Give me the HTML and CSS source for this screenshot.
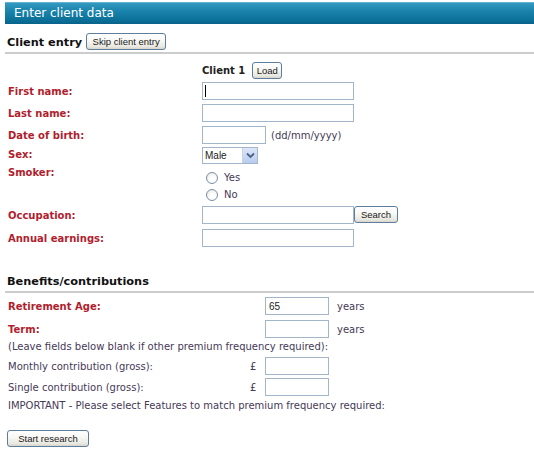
FILE: index.html
```html
<!DOCTYPE html>
<html>
<head>
<meta charset="utf-8">
<title>Enter client data</title>
<link rel="stylesheet" href="styles.css">
</head>
<body>
<div class="page">
  <div class="header">Enter client data</div>

  <div class="section-head">
    <h2 class="section-title">Client entry</h2>
    <button class="btn btn-skip" type="button">Skip client entry</button>
  </div>

  <div class="client">
    <div class="row row-client">
      <span class="label-spacer"></span>
      <span class="client-name">Client 1</span>
      <button class="btn btn-load" type="button">Load</button>
    </div>
    <div class="row">
      <label class="label">First name:</label>
      <span class="caret-wrap"><input class="field field-long" type="text"><span class="caret"></span></span>
    </div>
    <div class="row">
      <label class="label">Last name:</label>
      <input class="field field-long" type="text">
    </div>
    <div class="row">
      <label class="label">Date of birth:</label>
      <input class="field field-short" type="text">
      <span class="hint">(dd/mm/yyyy)</span>
    </div>
    <div class="row row-sex">
      <label class="label">Sex:</label>
      <span class="select-wrap">
        <select class="select"><option>Male</option><option>Female</option></select>
        <span class="select-arrow"><svg width="9" height="7" viewBox="0 0 9 7"><path d="M1 1.5 L4.5 5 L8 1.5" fill="none" stroke="#4d6185" stroke-width="1.8"/></svg></span>
      </span>
    </div>
    <div class="row-smoker">
      <label class="label label-top">Smoker:</label>
      <div class="radios">
        <label class="radio-row"><input class="radio" type="radio" name="smoker"><span>Yes</span></label>
        <label class="radio-row"><input class="radio" type="radio" name="smoker"><span>No</span></label>
      </div>
    </div>
    <div class="row">
      <label class="label">Occupation:</label>
      <input class="field field-long" type="text">
      <button class="btn btn-search" type="button">Search</button>
    </div>
    <div class="row row-annual">
      <label class="label">Annual earnings:</label>
      <input class="field field-long" type="text">
    </div>
  </div>

  <div class="section-head section-benefits">
    <h2 class="section-title">Benefits/contributions</h2>
  </div>

  <div class="benefits">
    <div class="brow brow-first">
      <label class="blabel label">Retirement Age:</label>
      <span class="currency"></span>
      <input class="field field-short" type="text" value="65">
      <span class="unit">years</span>
    </div>
    <div class="brow">
      <label class="blabel label">Term:</label>
      <span class="currency"></span>
      <input class="field field-short" type="text">
      <span class="unit">years</span>
    </div>
    <div class="note">(Leave fields below blank if other premium frequency required):</div>
    <div class="brow brow-monthly">
      <label class="blabel plain">Monthly contribution (gross):</label>
      <span class="currency">£</span>
      <input class="field field-short" type="text">
    </div>
    <div class="brow brow-single">
      <label class="blabel plain">Single contribution (gross):</label>
      <span class="currency">£</span>
      <input class="field field-short" type="text">
    </div>
    <div class="note note-important">IMPORTANT - Please select Features to match premium frequency required:</div>
    <button class="btn btn-start" type="button">Start research</button>
  </div>
</div>
</body>
</html>
```

FILE: styles.css
```css
html, body {
  margin: 0;
  padding: 0;
  background: #ffffff;
}

body {
  font-family: "DejaVu Sans", Verdana, sans-serif;
  font-size: 10px;
  color: #463957;
}

.page {
  padding-left: 5px;
}

.header {
  margin-top: 2px;
  height: 22px;
  line-height: 21px;
  padding-left: 9px;
  color: #ffffff;
  font-size: 12px;
  background: linear-gradient(#3399c0 0%, #1a83ab 40%, #0c7199 80%, #09628a 100%);
  border-top: 1px solid #66b1cf;
  box-sizing: border-box;
}

.section-head {
  display: flex;
  align-items: center;
  margin-top: 9px;
  height: 21px;
  padding-left: 2px;
  border-bottom: 2px solid #cccccc;
  box-sizing: border-box;
}

.section-title {
  margin: 0;
  font-size: 11.3px;
  font-weight: bold;
  color: #111111;
}

.btn {
  font-family: "Liberation Sans", Arial, sans-serif;
  font-size: 9.5px;
  color: #1a1a1a;
  height: 17px;
  padding: 0;
  border: 1px solid #5d7d9f;
  border-radius: 3px;
  background: linear-gradient(#ffffff 0%, #f7f7f3 45%, #e8e8e0 85%, #d6d4cb 100%);
  box-sizing: border-box;
  cursor: pointer;
}

.btn-skip {
  margin-left: 4px;
  width: 80px;
  margin-top: -2px;
}

.client {
  padding-left: 3px;
}

.row {
  display: flex;
  align-items: center;
  height: 20px;
  margin-top: 2px;
}

.row-client {
  height: 18px;
  margin-top: 7px;
}

.label-spacer {
  width: 194px;
}

.client-name {
  font-weight: bold;
  color: #222222;
}

.btn-load {
  margin-left: 7px;
  width: 30px;
}

.label {
  width: 194px;
  flex: none;
  font-weight: bold;
  color: #b01e2e;
}

.field {
  height: 18px;
  box-sizing: border-box;
  border: 1px solid #a3b6c9;
  padding: 0 3px;
  margin: 0;
  font-family: "Liberation Sans", Arial, sans-serif;
  font-size: 10px;
  color: #222222;
  background: #ffffff;
  outline: none;
}

.field-long {
  width: 152px;
}

.field-short {
  width: 64px;
}

.caret-wrap {
  position: relative;
  display: inline-flex;
}

.caret {
  position: absolute;
  left: 3px;
  top: 3px;
  width: 1px;
  height: 12px;
  background: #000000;
}

.hint {
  margin-left: 5px;
}

.row-sex {
  align-items: flex-start;
  padding-top: 0;
}

.row-sex .label {
  margin-top: 2px;
}

.select-wrap {
  position: relative;
  display: inline-flex;
}

.select {
  appearance: none;
  -webkit-appearance: none;
  width: 56px;
  height: 17px;
  box-sizing: border-box;
  border: 1px solid #a3b6c9;
  padding: 0 2px;
  font-family: "Liberation Sans", Arial, sans-serif;
  font-size: 10px;
  color: #222222;
  background: #ffffff;
  border-radius: 0;
  outline: none;
}

.select-arrow {
  position: absolute;
  right: 1px;
  top: 1px;
  width: 15px;
  height: 15px;
  display: flex;
  align-items: center;
  justify-content: center;
  background: linear-gradient(#dce6f8, #b9cbef);
  border-left: 1px solid #c4d3ee;
  box-sizing: border-box;
  pointer-events: none;
}

.row-smoker {
  display: flex;
  margin-top: 2px;
}

.label-top {
  margin-top: -3px;
  line-height: 13px;
  align-self: flex-start;
}

.radios {
  display: flex;
  flex-direction: column;
}

.radio-row {
  display: flex;
  align-items: center;
  height: 17px;
}

.radio {
  appearance: none;
  -webkit-appearance: none;
  margin: 0 6px 0 4px;
  width: 12px;
  height: 12px;
  border: 1px solid #7b8ea6;
  border-radius: 50%;
  background: radial-gradient(circle at 60% 65%, #ffffff 30%, #e3e3dc 100%);
  box-sizing: border-box;
}

.btn-search {
  width: 44px;
  margin-top: -2px;
}

.row-annual {
  margin-top: 3px;
}

.section-benefits {
  margin-top: 24px;
}

.benefits {
  padding-left: 3px;
}

.brow {
  display: flex;
  align-items: center;
  height: 20px;
  margin-top: 3px;
}

.brow-monthly {
  margin-top: 2px;
}

.brow-single {
  margin-top: 1px;
}

.blabel {
  width: 242px;
  flex: none;
}

.plain {
  color: #463957;
}

.currency {
  width: 15px;
  flex: none;
  font-size: 10px;
}

.unit {
  margin-left: 8px;
}

.note {
  height: 15px;
  line-height: 15px;
}

.note-important {
  height: 17px;
  line-height: 17px;
}

.btn-start {
  display: block;
  margin-top: 16px;
  margin-left: -1px;
  width: 82px;
}
```
